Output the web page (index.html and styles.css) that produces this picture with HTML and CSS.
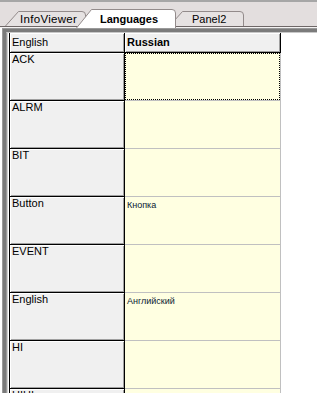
FILE: index.html
```html
<!DOCTYPE html>
<html>
<head>
<meta charset="utf-8">
<link rel="stylesheet" href="styles.css">
</head>
<body>
<div class="screen">
  <div class="tabstrip">
    <div class="tab tab-info">
      <svg class="tab-shape" width="81" height="15" viewBox="0 0 81 15"><path d="M0.5,15 L13.5,0.5 H77 Q80.5,0.5 80.5,4 V15" fill="#e6e2e2" stroke="#938b8b"/></svg>
      <span class="tab-label">InfoViewer</span>
    </div>
    <div class="tab tab-active">
      <svg class="tab-shape" width="100" height="19" viewBox="0 0 100 19"><path d="M0.5,19 L15.5,0.5 H96 Q99.5,0.5 99.5,4 V19" fill="#ffffff" stroke="#938b8b"/></svg>
      <span class="tab-label">Languages</span>
    </div>
    <div class="tab tab-panel">
      <svg class="tab-shape" width="75" height="15" viewBox="0 0 75 15"><path d="M0.5,15 L13.5,0.5 H71 Q74.5,0.5 74.5,4 V15" fill="#e6e2e2" stroke="#938b8b"/></svg>
      <span class="tab-label">Panel2</span>
    </div>
  </div>
  <div class="panel">
    <div class="frame">
      <div class="inner">
        <div class="grid">
          <div class="hcell c1">English</div>
          <div class="hcell c2">Russian</div>

          <div class="fcell">ACK</div>
          <div class="dcell"><div class="focus"></div></div>

          <div class="fcell">ALRM</div>
          <div class="dcell"></div>

          <div class="fcell">BIT</div>
          <div class="dcell"></div>

          <div class="fcell">Button</div>
          <div class="dcell"><span class="dtext">Кнопка</span></div>

          <div class="fcell">EVENT</div>
          <div class="dcell"></div>

          <div class="fcell">English</div>
          <div class="dcell"><span class="dtext">Английский</span></div>

          <div class="fcell">HI</div>
          <div class="dcell"></div>

          <div class="fcell">HIHI</div>
          <div class="dcell"></div>
        </div>
      </div>
    </div>
  </div>
</div>
</body>
</html>
```

FILE: styles.css
```css
html, body {
  margin: 0;
  padding: 0;
  background: #ffffff;
}

.screen {
  width: 317px;
  height: 393px;
  overflow: hidden;
  font-family: "Liberation Sans", Arial, sans-serif;
  color: #000;
}

.tabstrip {
  height: 26px;
  border-top: 2px solid #a6a6a6;
  background: #e3dede;
  box-shadow: inset 0 -1px #f4f2f2, inset 0 -2px #6e6767;
  display: flex;
  align-items: flex-end;
  padding-left: 5px;
}

.tab {
  position: relative;
  flex: none;
  box-sizing: border-box;
}

.tab-shape {
  position: absolute;
  left: 0;
  top: 0;
  display: block;
}

.tab-label {
  position: relative;
  display: block;
  font-size: 11.5px;
  line-height: 13px;
  white-space: nowrap;
}

.tab-info {
  width: 81px;
  height: 15px;
  margin-bottom: 2px;
  padding: 2px 0 0 15px;
  z-index: 1;
}

.tab-info .tab-label {
  letter-spacing: 0.3px;
}

.tab-active {
  width: 100px;
  height: 19px;
  margin-left: -10px;
  padding: 4px 0 0 24px;
  z-index: 3;
}

.tab-active .tab-label {
  font-weight: bold;
  font-size: 11px;
}

.tab-panel {
  width: 75px;
  height: 15px;
  margin-left: -7px;
  margin-bottom: 2px;
  padding: 2px 0 0 23px;
  z-index: 2;
}

.tab-panel .tab-label {
  font-size: 11px;
}

.panel {
  margin-left: 2px;
  border-left: 1px solid #9a9a9a;
  border-top: 1px solid #9a9a9a;
  height: 364px;
  background: #d6d2d2;
}

.frame {
  border-left: 3px solid #7b7b7b;
  border-top: 3px solid #7b7b7b;
  height: 361px;
}

.inner {
  border-left: 1px solid #9a9a9a;
  border-top: 1px solid #c8c8c8;
  padding-left: 2px;
  box-shadow: inset 1px 0 #d0d0d0;
  background: #ffffff;
  height: 360px;
}

.grid {
  display: grid;
  grid-template-columns: 115px 156px;
  grid-auto-rows: 48px;
  grid-template-rows: 20px;
  border-left: 1px solid #000;
  font-size: 11px;
  line-height: 13px;
  width: 271px;
}

.hcell {
  box-sizing: border-box;
  background: #f0f0f0;
  border-right: 1px solid #000;
  border-bottom: 1px solid #000;
  box-shadow: inset 1px 1px #ffffff, inset -1px -1px #a0a0a0;
  padding-top: 3px;
  white-space: nowrap;
}

.hcell.c1 {
  padding-left: 2px;
}

.hcell.c2 {
  padding-left: 2px;
  font-weight: bold;
}

.fcell {
  box-sizing: border-box;
  background: #f0f0f0;
  border-right: 1px solid #000;
  border-bottom: 1px solid #000;
  box-shadow: inset 1px 1px #ffffff, inset -1px -1px #a0a0a0;
  padding-left: 2px;
  white-space: nowrap;
}

.dcell {
  box-sizing: border-box;
  background: #ffffe1;
  border-right: 1px solid #c0c0c0;
  border-bottom: 1px solid #c0c0c0;
  padding: 3px 0 0 2px;
  position: relative;
}

.focus {
  position: absolute;
  left: 0;
  top: 0;
  right: 0;
  bottom: 0;
  outline: 1px dotted #000;
  outline-offset: -1px;
}

.dtext {
  display: block;
  font-size: 9px;
  line-height: 11px;
  color: #0a1a33;
}
```
